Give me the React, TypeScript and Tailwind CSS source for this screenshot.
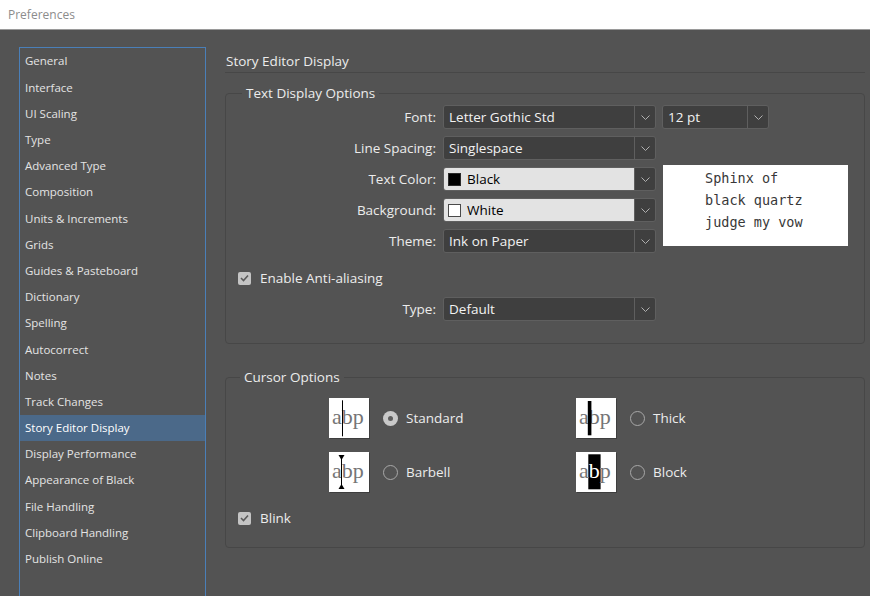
import React from 'react';

const sidebarItems = [
  'General',
  'Interface',
  'UI Scaling',
  'Type',
  'Advanced Type',
  'Composition',
  'Units & Increments',
  'Grids',
  'Guides & Pasteboard',
  'Dictionary',
  'Spelling',
  'Autocorrect',
  'Notes',
  'Track Changes',
  'Story Editor Display',
  'Display Performance',
  'Appearance of Black',
  'File Handling',
  'Clipboard Handling',
  'Publish Online',
];

const Chevron = () => (
  <svg width="9" height="5" viewBox="0 0 9 5" fill="none">
    <path d="M0.5 0.5 L4.5 4.5 L8.5 0.5" stroke="#b0b0b0" strokeWidth="1" />
  </svg>
);

interface SelectProps {
  children: React.ReactNode;
  light?: boolean;
  small?: boolean;
}

const Select: React.FC<SelectProps> = ({ children, light = false, small = false }) => (
  <div
    className={`flex h-[24px] overflow-hidden rounded-[3px] border border-[#5f5f5f] ${
      small ? 'w-[107px]' : 'w-[213px]'
    }`}
  >
    <div
      className={`flex flex-1 items-center text-[13.5px] ${
        light ? 'gap-[6px] bg-[#e3e3e3] pl-[4px] text-black' : 'bg-[#3f3f3f] pl-[5px] text-[#f2f2f2]'
      }`}
    >
      {children}
    </div>
    <div className="flex w-[21px] items-center justify-center border-l border-[#5f5f5f] bg-[#3f3f3f]">
      <Chevron />
    </div>
  </div>
);

const Checkbox = () => (
  <div className="flex h-[13px] w-[13px] items-center justify-center rounded-[2px] bg-[#c4c4c4]">
    <svg width="9" height="8" viewBox="0 0 9 8" fill="none">
      <path d="M1 4 L3.5 6.5 L8 1.5" stroke="#5a5a5a" strokeWidth="1.6" />
    </svg>
  </div>
);

const Radio = ({ checked = false }: { checked?: boolean }) =>
  checked ? (
    <div className="flex h-[15px] w-[15px] items-center justify-center rounded-full bg-[#c9c9c9]">
      <div className="h-[5px] w-[5px] rounded-full bg-[#5e5e5e]" />
    </div>
  ) : (
    <div className="h-[15px] w-[15px] rounded-full border border-[#a8a8a8]" />
  );

type CursorKind = 'standard' | 'barbell' | 'thick' | 'block';

const CursorSample = ({ kind }: { kind: CursorKind }) => (
  <svg width="40" height="40" viewBox="0 0 40 40" className="bg-white shadow-[1px_1px_0_#3e3e3e]">
    <defs>
      <clipPath id="blockclip">
        <rect x="12.3" y="2.3" width="12.3" height="35" />
      </clipPath>
    </defs>
    <text x="3" y="25.5" fontFamily="'Liberation Serif', serif" fontSize="22" fill="#757575">
      abp
    </text>
    {kind === 'standard' && <rect x="13" y="2.3" width="1" height="36" fill="#000" />}
    {kind === 'barbell' && (
      <g fill="#000">
        <rect x="12" y="3" width="1" height="34" />
        <path d="M9.5 3 L15.5 3 L12.5 8 Z" />
        <path d="M9.5 37 L15.5 37 L12.5 32 Z" />
      </g>
    )}
    {kind === 'thick' && <rect x="11.8" y="3" width="3.6" height="34.3" fill="#000" />}
    {kind === 'block' && (
      <>
        <rect x="12.3" y="2.3" width="12.3" height="35" fill="#000" />
        <text
          x="3"
          y="25.5"
          fontFamily="'Liberation Serif', serif"
          fontSize="22"
          fill="#fff"
          clipPath="url(#blockclip)"
        >
          abp
        </text>
      </>
    )}
  </svg>
);

const CursorOption = ({ kind, label, checked = false }: { kind: CursorKind; label: string; checked?: boolean }) => (
  <div className="flex w-[247px] items-center">
    <CursorSample kind={kind} />
    <div className="ml-[14px]">
      <Radio checked={checked} />
    </div>
    <span className="ml-[8px] text-[13.5px] text-[#ececec]">{label}</span>
  </div>
);

const Label = ({ children }: { children: React.ReactNode }) => (
  <div className="flex items-center justify-end text-[13.5px] text-[#ececec]">{children}</div>
);

export default function App() {
  return (
    <div className="h-[596px] w-[870px] overflow-hidden bg-[#535353] font-['Open_Sans',sans-serif] text-[#e6e6e6]">
      <div className="flex h-[30px] items-center border-b border-[#9a9a9a] bg-white pl-[8px] text-[12px] text-[#8c8c8c]">
        Preferences
      </div>

      <div className="flex pl-[19px] pt-[17px]">
        {/* Sidebar */}
        <div className="h-[560px] w-[187px] shrink-0 border border-b-0 border-[#4a7fb8]">
          {sidebarItems.map((item) => (
            <div
              key={item}
              className={`flex h-[26.2px] items-center pl-[5px] text-[11.5px] ${
                item === 'Story Editor Display' ? 'bg-[#4b6989] text-white' : 'text-[#e4e4e4]'
              }`}
            >
              {item}
            </div>
          ))}
        </div>

        {/* Content */}
        <div className="ml-[19px] w-[640px]">
          <div className="h-[26px] border-b border-[#474747] pl-[1px] pt-[5px] text-[13.5px] leading-[18px] text-[#ececec]">
            Story Editor Display
          </div>

          <fieldset className="mt-[11px] rounded-[4px] border border-[#474747] pb-[22px]">
            <legend className="ml-[16px] px-[4px] text-[13.5px] leading-[18px] text-[#ececec]">
              Text Display Options
            </legend>
            <div className="flex pt-[3px]">
              <div className="grid grid-cols-[210px_213px] gap-x-[7px] gap-y-[7px]">
                <Label>Font:</Label>
                <Select>Letter Gothic Std</Select>
                <Label>Line Spacing:</Label>
                <Select>Singlespace</Select>
                <Label>Text Color:</Label>
                <Select light>
                  <span className="h-[13px] w-[13px] border border-[#2a2a2a] bg-black" />
                  Black
                </Select>
                <Label>Background:</Label>
                <Select light>
                  <span className="h-[13px] w-[13px] border border-[#4a4a4a] bg-white" />
                  White
                </Select>
                <Label>Theme:</Label>
                <Select>Ink on Paper</Select>
              </div>
              <div className="ml-[6px] flex flex-col">
                <Select small>12 pt</Select>
                <div className="ml-[1px] mt-[36px] h-[81px] w-[185px] bg-white pl-[42px] pt-[2px] font-['DejaVu_Sans_Mono',monospace] text-[13.5px] leading-[22px] text-[#383838]">
                  <div>Sphinx of</div>
                  <div>black quartz</div>
                  <div>judge my vow</div>
                </div>
              </div>
            </div>

            <div className="mt-[16px] flex h-[18px] items-center pl-[12px]">
              <Checkbox />
              <span className="ml-[9px] text-[13.5px] text-[#ececec]">Enable Anti-aliasing</span>
            </div>

            <div className="mt-[10px] grid grid-cols-[210px_213px] gap-x-[7px]">
              <Label>Type:</Label>
              <Select>Default</Select>
            </div>
          </fieldset>

          <fieldset className="mt-[24px] rounded-[4px] border border-[#474747] pb-[20px]">
            <legend className="ml-[14px] px-[4px] text-[13.5px] leading-[18px] text-[#ececec]">
              Cursor Options
            </legend>
            <div className="flex flex-col gap-[14px] pl-[103px] pt-[12px]">
              <div className="flex">
                <CursorOption kind="standard" label="Standard" checked />
                <CursorOption kind="thick" label="Thick" />
              </div>
              <div className="flex">
                <CursorOption kind="barbell" label="Barbell" />
                <CursorOption kind="block" label="Block" />
              </div>
            </div>
            <div className="mt-[17px] flex h-[18px] items-center pl-[12px]">
              <Checkbox />
              <span className="ml-[9px] text-[13.5px] text-[#ececec]">Blink</span>
            </div>
          </fieldset>
        </div>
      </div>
    </div>
  );
}
